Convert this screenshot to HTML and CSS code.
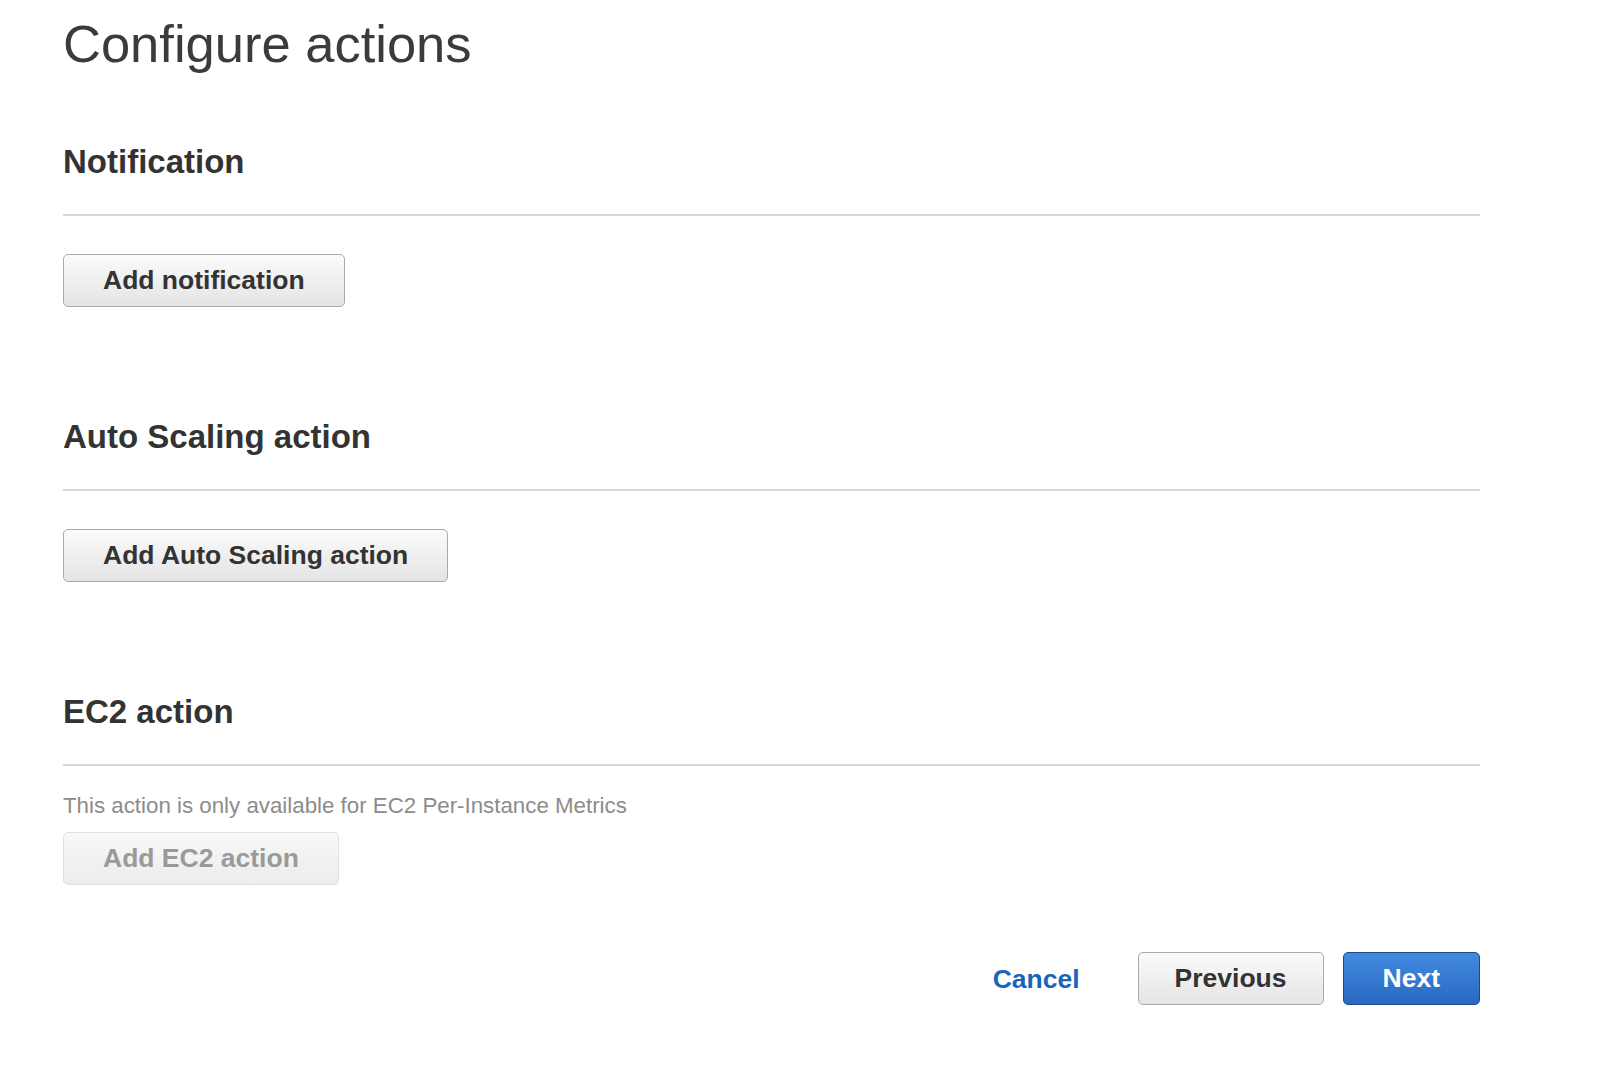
FILE: index.html
```html
<!DOCTYPE html>
<html lang="en">
<head>
<meta charset="utf-8">
<title>Configure actions</title>
<link rel="stylesheet" href="styles.css">
</head>
<body>
<main class="page">
  <h1 class="title">Configure actions</h1>

  <section class="section section-first">
    <h2 class="section-heading">Notification</h2>
    <button class="btn btn-add" type="button">Add notification</button>
  </section>

  <section class="section">
    <h2 class="section-heading">Auto Scaling action</h2>
    <button class="btn btn-add" type="button">Add Auto Scaling action</button>
  </section>

  <section class="section">
    <h2 class="section-heading">EC2 action</h2>
    <p class="note">This action is only available for EC2 Per-Instance Metrics</p>
    <button class="btn btn-disabled" type="button" disabled>Add EC2 action</button>
  </section>

  <footer class="footer">
    <a class="link-cancel" href="#">Cancel</a>
    <button class="btn btn-prev" type="button">Previous</button>
    <button class="btn btn-primary" type="button">Next</button>
  </footer>
</main>
</body>
</html>
```

FILE: styles.css
```css
html, body {
  margin: 0;
  padding: 0;
  background: #ffffff;
}

body {
  font-family: "Liberation Sans", Arial, Helvetica, sans-serif;
  color: #333333;
}

.page {
  width: 1417px;
  padding: 14px 0 40px 63px;
  display: flex;
  flex-direction: column;
  align-items: flex-start;
}

.title {
  margin: 0;
  font-size: 52.5px;
  line-height: 60px;
  font-weight: normal;
  color: #3b3b3b;
}

.section {
  width: 100%;
  display: flex;
  flex-direction: column;
  align-items: flex-start;
  margin-top: 110px;
}

.section-first {
  margin-top: 68px;
}

.section-heading {
  align-self: stretch;
  margin: 0 0 38px 0;
  padding-bottom: 32px;
  border-bottom: 2px solid #d7d7d7;
  font-size: 33px;
  line-height: 40px;
  font-weight: bold;
  color: #333333;
}

.note {
  margin: -11px 0 13px 0;
  font-size: 22.3px;
  line-height: 26px;
  color: #8c8c8c;
}

.btn {
  font-family: "Liberation Sans", Arial, Helvetica, sans-serif;
  font-size: 26.5px;
  line-height: 30px;
  font-weight: bold;
  color: #333333;
  padding: 10px 39px 11px 39px;
  border: 1px solid #a9a9a9;
  border-radius: 5px;
  background: linear-gradient(#fbfbfb, #e4e4e4);
  cursor: pointer;
}

.btn-prev {
  padding-left: 36px;
  padding-right: 36px;
}

.btn-disabled {
  color: #9a9a9a;
  border-color: #e0e0e0;
  background: linear-gradient(#f8f8f8, #ececec);
  cursor: default;
}

.btn-primary {
  color: #ffffff;
  border-color: #1b4b8c;
  background: linear-gradient(#428ae0, #2a68c2);
}

.footer {
  align-self: stretch;
  margin-top: 67px;
  display: flex;
  justify-content: flex-end;
  align-items: center;
  gap: 19px;
}

.link-cancel {
  font-size: 26.5px;
  line-height: 30px;
  font-weight: bold;
  color: #1a64bb;
  text-decoration: none;
  margin-right: 39px;
}
```
